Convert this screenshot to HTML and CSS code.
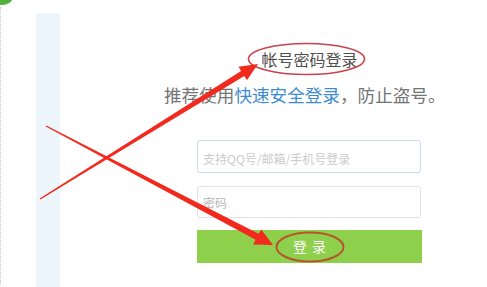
FILE: index.html
```html
<!DOCTYPE html>
<html lang="zh-CN">
<head>
<meta charset="utf-8">
<title>帐号密码登录</title>
<link rel="stylesheet" href="styles.css">
</head>
<body>
<div class="page">
  <div class="dot-badge"></div>
  <div class="frame">
    <div class="gutter"></div>
    <div class="strip"></div>
    <div class="main">
      <div class="form">
        <div class="title">帐号密码登录</div>
        <div class="sub">推荐使用<span class="link">快速安全登录</span>，防止盗号。</div>
        <input class="field field-user" type="text" placeholder="支持QQ号/邮箱/手机号登录">
        <input class="field field-pass" type="text" placeholder="密码">
        <div class="btn">登 录</div>
      </div>
    </div>
  </div>
  <svg class="marks" width="487" height="287" viewBox="0 0 487 287">
    <ellipse cx="306.5" cy="59" rx="58" ry="15.5" fill="none" stroke="#c8434b" stroke-width="1.6"/>
    <ellipse cx="310" cy="247" rx="33.5" ry="14.5" fill="none" stroke="#b4562e" stroke-width="2"/>
    <polygon fill="#f22a1d" points="40.4,199.6 244.3,76.0 246.9,80.3 258,64 238.5,66.7 241.1,70.9 39.6,198.4"/>
    <polygon fill="#f22a1d" points="45.7,126.6 255.6,239.7 253.2,244.4 273,245 261.2,229.4 258.6,233.7 46.3,125.4"/>
  </svg>
</div>
</body>
</html>
```

FILE: styles.css
```css
html, body {
  margin: 0;
  padding: 0;
  background: #ffffff;
}
body {
  font-family: "Noto Sans CJK SC", "Noto Sans", sans-serif;
}
.page {
  position: relative;
  width: 487px;
  height: 287px;
  overflow: hidden;
}
.dot-badge {
  position: absolute;
  left: -11px;
  top: -21px;
  width: 26px;
  height: 26px;
  border-radius: 50%;
  background: #4fb03a;
}
.frame {
  display: flex;
  margin-top: 7px;
  height: 278px;
  border-left: 1px dotted #c4c4c4;
}
.gutter {
  width: 35px;
  flex: none;
}
.strip {
  width: 24px;
  flex: none;
  margin-top: 6px;
  height: 280px;
  background: #eef6fd;
}
.main {
  flex: 1;
  padding-left: 137px;
}
.form {
  width: 225px;
  display: flex;
  flex-direction: column;
}
.title {
  margin-top: 44px;
  font-size: 16px;
  line-height: 16px;
  color: #505050;
  text-align: center;
}
.sub {
  margin-top: 19px;
  margin-left: -33px;
  font-size: 17.6px;
  line-height: 18px;
  color: #747474;
  white-space: nowrap;
}
.link {
  color: #3d8cd2;
}
.field {
  box-sizing: border-box;
  width: 224px;
  margin: 0;
  padding: 0 0 0 5px;
  border-radius: 3px;
  font-family: "Noto Sans CJK SC", "Noto Sans", sans-serif;
  font-size: 12px;
  background: #ffffff;
  outline: none;
}
.field::placeholder {
  color: #cbcbcb;
}
.field-user {
  margin-top: 36px;
  height: 33px;
  border: 1px solid #c9dcef;
  padding-top: 3px;
}
.field-pass {
  margin-top: 13px;
  height: 32px;
  border: 1px solid #e2e2e2;
}
.field-pass::placeholder {
  color: #b8b8b8;
}
.btn {
  margin-top: 12px;
  height: 33px;
  width: 225px;
  background: #8ecf4c;
  color: #ffffff;
  font-size: 14px;
  line-height: 33px;
  text-align: center;
  word-spacing: 2px;
}
.marks {
  position: absolute;
  left: 0;
  top: 0;
}
```
